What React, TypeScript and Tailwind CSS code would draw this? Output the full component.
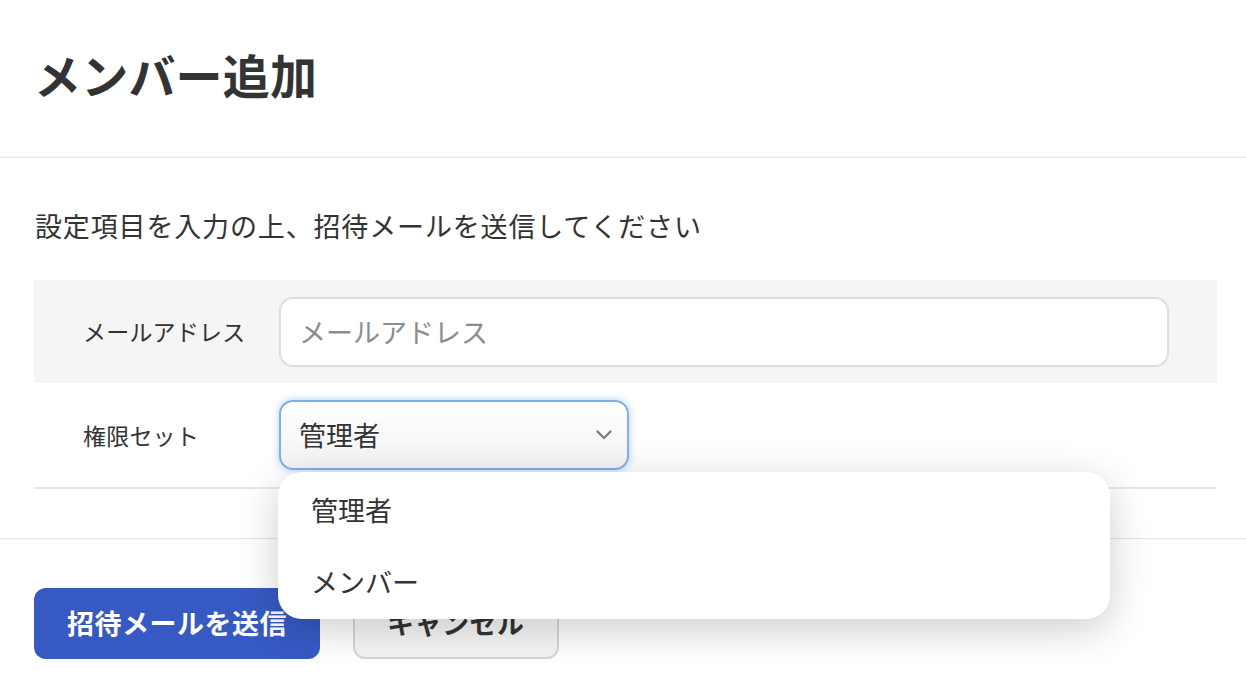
import React from "react";

const font = { fontFamily: '"Noto Sans CJK JP", "Noto Sans", sans-serif' };

export default function App() {
  return (
    <div
      className="relative w-full h-[686px] bg-white overflow-hidden text-[#333333]"
      style={font}
    >
      {/* Header */}
      <div className="h-[158px] flex items-center pl-[34px] pb-[10px] border-b border-[#e3e3e3]">
        <h1 className="text-[47px] leading-none font-bold tracking-[0.2px]">メンバー追加</h1>
      </div>

      {/* Body */}
      <div className="pl-[34px] pr-[29px] pt-[48px] pb-[49px] border-b border-[#e3e3e3]">
        <p className="text-[27px] leading-[40px] pl-[1px] text-[#333333] mb-[34px] tracking-[0.85px]">
          設定項目を入力の上、招待メールを送信してください
        </p>

        <div className="h-[103px] bg-[#f6f5f5] flex items-center pl-[49px] pr-[48px]">
          <div className="w-[196px] text-[23px] text-[#333333] tracking-[0.2px]">メールアドレス</div>
          <input
            className="flex-1 h-[70px] rounded-[14px] border-2 border-[#dedede] bg-white px-[18px] text-[27px] text-[#333333] placeholder:text-[#8d8d8d] outline-none"
            placeholder="メールアドレス"
            style={font}
          />
        </div>

        <div className="h-[106px] flex items-center pl-[49px] border-b-2 border-[#e6e6e6]">
          <div className="w-[196px] text-[23px] text-[#333333] tracking-[0.2px]">権限セット</div>
          <div className="w-[350px] h-[70px] rounded-[14px] border-2 border-[#7fb0e6] shadow-[0_0_8px_rgba(110,165,235,0.55)] bg-gradient-to-b from-white to-[#f3f3f3] flex items-center justify-between pl-[18px] pr-[15px]">
            <span className="text-[27px] text-[#333333]">管理者</span>
            <svg width="16" height="10" viewBox="0 0 16 10" fill="none">
              <path d="M1.5 1.5 L8 8 L14.5 1.5" stroke="#7a7a7a" strokeWidth="2.2" strokeLinecap="round" strokeLinejoin="round" />
            </svg>
          </div>
        </div>
      </div>

      {/* Footer */}
      <div className="px-[34px] pt-[49px] flex gap-[33px]">
        <button
          className="h-[71px] px-[33px] rounded-[12px] bg-[#3759c4] text-white text-[27px] font-bold tracking-[0.5px]"
          style={font}
        >
          招待メールを送信
        </button>
        <button
          className="h-[71px] px-[32px] rounded-[12px] border-2 border-[#d6d6d6] bg-gradient-to-b from-white to-[#f3f3f3] text-[#333333] text-[27px] font-bold tracking-[0.5px]"
          style={font}
        >
          キャンセル
        </button>
      </div>

      {/* Dropdown menu */}
      <div className="absolute left-[278px] top-[472px] w-[832px] h-[147px] rounded-[24px] bg-white shadow-[0_10px_40px_rgba(0,0,0,0.2)] pt-[2px]">
        <div className="h-[72px] flex items-center pl-[33px] text-[27px] text-[#333333]">管理者</div>
        <div className="h-[72px] flex items-center pl-[33px] text-[27px] text-[#333333]">メンバー</div>
      </div>
    </div>
  );
}
